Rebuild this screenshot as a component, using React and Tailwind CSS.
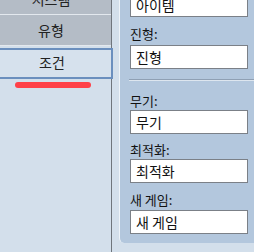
export default function App() {
  const font = { fontFamily: '"Noto Sans CJK KR", "Noto Sans", sans-serif' };
  const Input = ({ value, className = "" }) => (
    <div className={`h-[24px] w-[118px] border border-[#7b8087] bg-white pl-[5px] text-[14px] leading-[22px] text-[#111] ${className}`}>
      {value}
    </div>
  );
  const Label = ({ children, className = "" }) => (
    <div className={`h-[17px] text-[13px] leading-[17px] text-[#111] ${className}`}>{children}</div>
  );
  return (
    <div className="flex h-[252px] w-[254px] overflow-hidden bg-[#d3dfeb]" style={font}>
      {/* Left tab column */}
      <div className="flex h-full w-[112px] shrink-0 flex-col border-r border-[#6f757c]">
        <div className="-mt-[16px] flex h-[31px] items-center justify-center border-b border-[#e3e8ee] bg-[#b4bcc6] pr-[9px] text-[14px] text-[#222]">
          시스템
        </div>
        <div className="flex h-[31px] items-center justify-center border-b border-[#e3e8ee] bg-[#b4bcc6] pr-[9px] text-[14px] text-[#222]">
          유형
        </div>
        <div className="-mr-[2px] mt-[2px] flex h-[31px] items-center justify-center border-2 border-l-0 border-[#6b8fbe] bg-[#d6e1ed] pr-[7px] pb-[3px] text-[14px] text-[#222]">
          조건
        </div>
        <div className="ml-[15px] mt-[3px] h-[6px] w-[76px] rounded-full bg-[#ff4048]" />
      </div>
      {/* Gap */}
      <div className="w-[7px] shrink-0" />
      {/* Right panel */}
      <div className="flex-1">
        <div className="flex h-[243px] flex-col rounded-bl-[5px] border-l border-[#eef3f8] bg-[#b3c7dd] pl-[10px]">
          <Input value="아이템" className="-mt-[7px]" />
          <Label className="mt-[8px]">진형:</Label>
          <Input value="진형" className="mt-[3px]" />
          <div className="-ml-[1px] mt-[10px] h-[2px] border-t border-b border-t-[#8fa0b4] border-b-[#dde6ef]" />
          <Label className="mt-[11px]">무기:</Label>
          <Input value="무기" className="mt-[1px]" />
          <Label className="mt-[7px]">최적화:</Label>
          <Input value="최적화" className="mt-[1px]" />
          <Label className="mt-[8px]">새 게임:</Label>
          <Input value="새 게임" className="mt-[2px]" />
        </div>
      </div>
    </div>
  );
}
